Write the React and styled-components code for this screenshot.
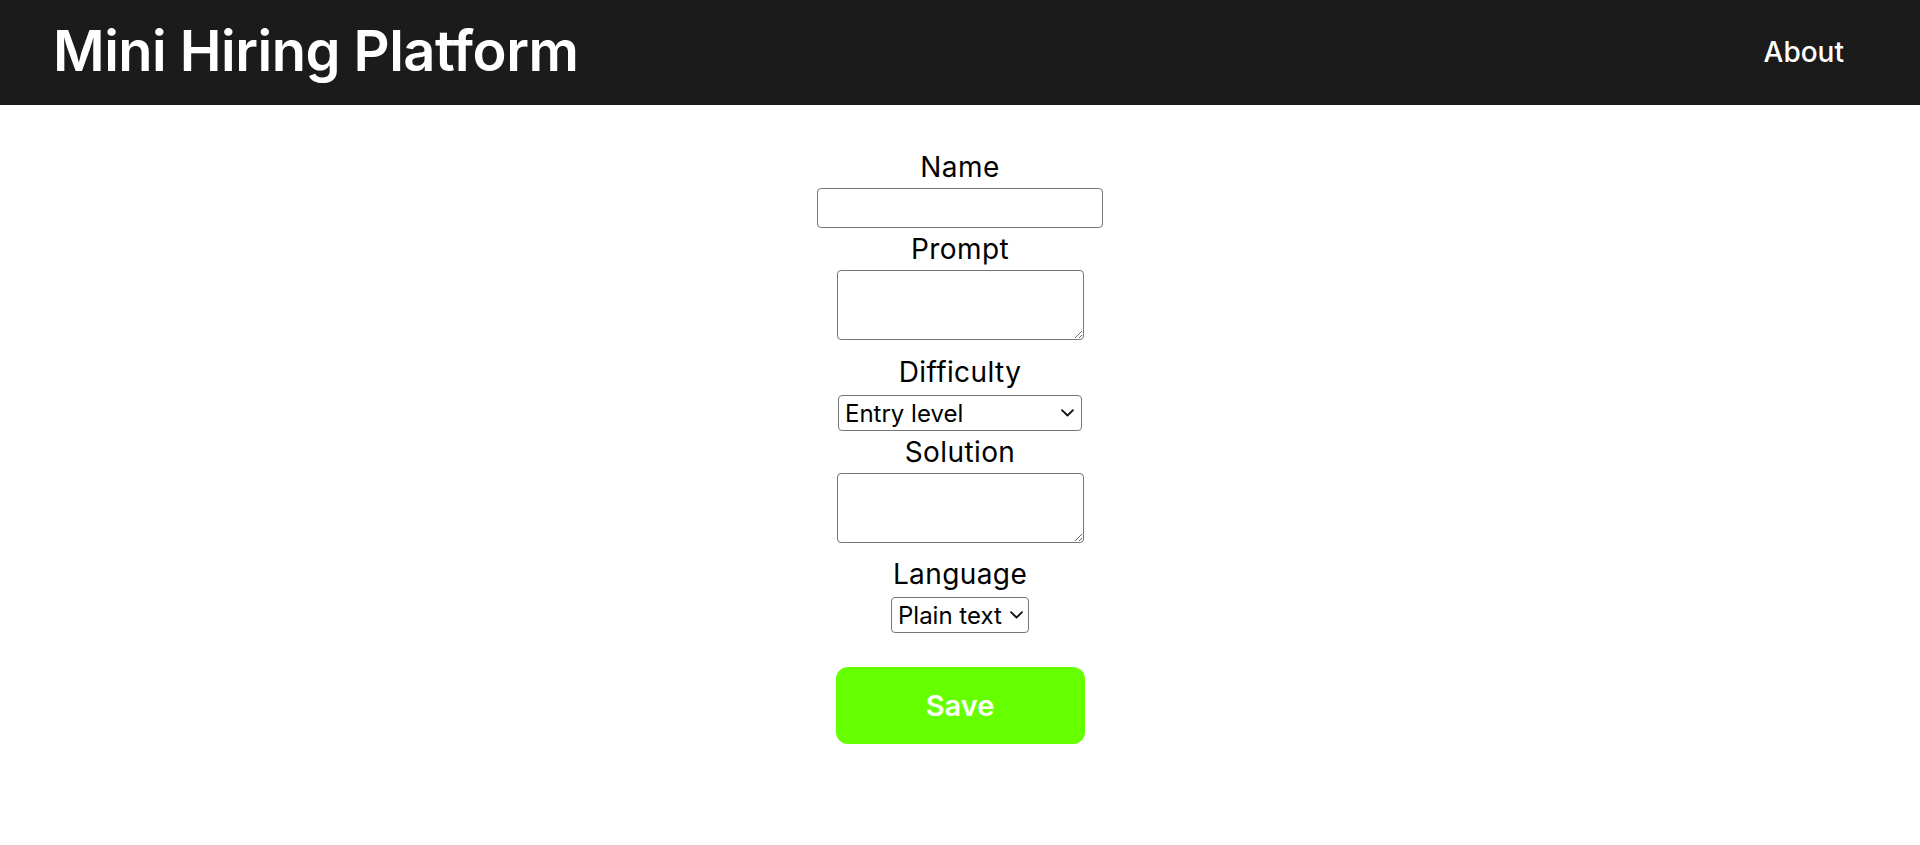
import React from 'react';
import styled, { createGlobalStyle } from 'styled-components';

const GlobalStyle = createGlobalStyle`
    body {
        margin: 0;
        background-color: #FFFFFF;
        font-family: 'Inter', 'Noto Sans', sans-serif;
    }
`

function Chevron() {
    return (
        <ChevronIcon width="13" height="8" viewBox="0 0 13 8">
            <path d="M1 1.2 L6.5 6.5 L12 1.2" fill="none" stroke="#111111" strokeWidth="1.8" strokeLinecap="round" strokeLinejoin="round" />
        </ChevronIcon>
    )
}

export default function App() {
    return (
        <>
            <GlobalStyle />
            <Header>
                <Logo>Mini Hiring Platform</Logo>
                <NavLink href="#">About</NavLink>
            </Header>
            <Form onSubmit={e => e.preventDefault()}>
                <Label htmlFor="name">Name</Label>
                <TextInput id="name" type="text" />
                <Label htmlFor="prompt">Prompt</Label>
                <TextArea id="prompt" />
                <Label htmlFor="difficulty" $top={16}>Difficulty</Label>
                <SelectWrap $width={244}>
                    <Select id="difficulty">
                        <option>Entry level</option>
                        <option>Mid level</option>
                        <option>Senior level</option>
                    </Select>
                    <Chevron />
                </SelectWrap>
                <Label htmlFor="solution">Solution</Label>
                <TextArea id="solution" />
                <Label htmlFor="language" $top={15}>Language</Label>
                <SelectWrap $width={138} $arrow={6}>
                    <Select id="language">
                        <option>Plain text</option>
                        <option>JavaScript</option>
                        <option>Python</option>
                    </Select>
                    <Chevron />
                </SelectWrap>
                <SaveButton type="submit">Save</SaveButton>
            </Form>
        </>
    )
}

const Header = styled.header`
    height: 105px;
    background-color: #1B1B1B;
    display: flex;
    align-items: center;
    justify-content: space-between;
    padding: 0 76px 0 53px;
`
const Logo = styled.div`
    color: #FFFFFF;
    font-size: 56px;
    font-weight: 600;
    letter-spacing: -0.5px;
    margin-top: -4px;
`
const NavLink = styled.a`
    color: #FFFFFF;
    font-size: 28px;
    font-weight: 500;
    text-decoration: none;
    margin-top: -2px;
`
const Form = styled.form`
    display: flex;
    flex-direction: column;
    align-items: center;
    padding-top: 41px;
`
const Label = styled.label`
    display: block;
    font-size: 28px;
    line-height: 32px;
    letter-spacing: 0.4px;
    color: #000000;
    margin-top: ${p => p.$top || 5}px;
    margin-bottom: 5px;
`
const TextInput = styled.input`
    box-sizing: border-box;
    width: 286px;
    height: 40px;
    border: 1px solid #767676;
    border-radius: 4px;
    margin: 0;
`
const TextArea = styled.textarea`
    box-sizing: border-box;
    width: 247px;
    height: 70px;
    border: 1px solid #767676;
    border-radius: 4px;
    margin: 0;
`
const SelectWrap = styled.div`
    position: relative;
    width: ${p => p.$width}px;
    height: 36px;
    margin-top: 2px;

    svg {
        right: ${p => p.$arrow || 8}px;
    }
`
const Select = styled.select`
    box-sizing: border-box;
    width: 100%;
    height: 100%;
    appearance: none;
    padding: 0 0 0 6px;
    font-family: 'Inter', 'Noto Sans', sans-serif;
    font-size: 24px;
    color: #000000;
    background-color: #FFFFFF;
    border: 1px solid #767676;
    border-radius: 4px;
    margin: 0;
`
const ChevronIcon = styled.svg`
    position: absolute;
    top: 50%;
    margin-top: -4px;
    pointer-events: none;
`
const SaveButton = styled.button`
    width: 249px;
    height: 77px;
    margin-top: 34px;
    background-color: #66FF00;
    border: none;
    border-radius: 12px;
    color: #FFFFFF;
    font-family: 'Inter', 'Noto Sans', sans-serif;
    font-size: 29px;
    font-weight: 600;
    cursor: pointer;
`
